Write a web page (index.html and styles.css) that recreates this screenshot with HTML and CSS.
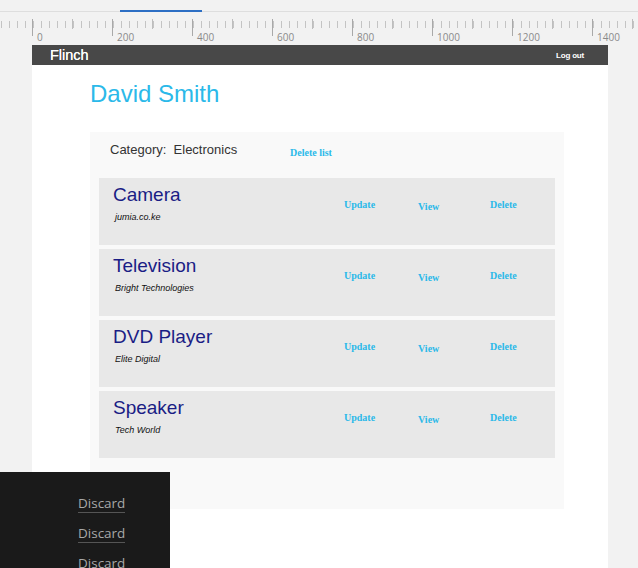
FILE: index.html
```html
<!DOCTYPE html>
<html lang="en">
<head>
	<meta charset="UTF-8">
	<meta name="viewport" content="width=device-width, initial-scale=1.0">
	<title>Flinch - Shopping lists</title>
	<link rel="stylesheet" href="styles.css">
</head>
<body>
	<div class="topbar">
		<span class="tab-line"></span>
	</div>
	<div class="ruler">
		<span>0</span>
		<span>200</span>
		<span>400</span>
		<span>600</span>
		<span>800</span>
		<span>1000</span>
		<span>1200</span>
		<span>1400</span>
	</div>

	<div class="page">
		<nav class="navbar">
			<span class="brand">Flinch</span>
			<a href="#" class="logout">Log out</a>
		</nav>

		<main class="content">
			<h1 class="user-name">David Smith</h1>

			<section class="list-card">
				<div class="list-head">
					<span class="category">Category:&nbsp; Electronics</span>
					<a href="#" class="action">Delete list</a>
				</div>

				<div class="items">
					<div class="item">
						<div class="info">
							<h2>Camera</h2>
							<p>jumia.co.ke</p>
						</div>
						<a href="#" class="action">Update</a>
						<a href="#" class="action view">View</a>
						<a href="#" class="action">Delete</a>
					</div>
					<div class="item">
						<div class="info">
							<h2>Television</h2>
							<p>Bright Technologies</p>
						</div>
						<a href="#" class="action">Update</a>
						<a href="#" class="action view">View</a>
						<a href="#" class="action">Delete</a>
					</div>
					<div class="item">
						<div class="info">
							<h2>DVD Player</h2>
							<p>Elite Digital</p>
						</div>
						<a href="#" class="action">Update</a>
						<a href="#" class="action view">View</a>
						<a href="#" class="action">Delete</a>
					</div>
					<div class="item">
						<div class="info">
							<h2>Speaker</h2>
							<p>Tech World</p>
						</div>
						<a href="#" class="action">Update</a>
						<a href="#" class="action view">View</a>
						<a href="#" class="action">Delete</a>
					</div>
				</div>
			</section>
		</main>
	</div>

	<div class="discard-panel">
		<a href="#">Discard</a>
		<a href="#">Discard</a>
		<a href="#">Discard</a>
	</div>
</body>
</html>
```

FILE: styles.css
```css
* {
	margin: 0;
	padding: 0;
	box-sizing: border-box;
}
html, body {
	height: 568px;
	overflow: hidden;
}
body {
	background-color: #f2f2f2;
	font-family: "Liberation Sans", Arial, sans-serif;
	position: relative;
}
a {
	text-decoration: none;
}

/* editor chrome */
.topbar {
	height: 12px;
	border-bottom: 1px solid #dedede;
}
.tab-line {
	display: block;
	margin-left: 120px;
	width: 82px;
	height: 12px;
	border-bottom: 2px solid #2d6fc4;
}
.ruler {
	display: flex;
	height: 33px;
	padding-left: 32px;
	padding-top: 19px;
	overflow: hidden;
	background-image:
		repeating-linear-gradient(to right, #a9a9a9 0 1px, transparent 1px 80px),
		repeating-linear-gradient(to right, #bdbdbd 0 1px, transparent 1px 80px),
		repeating-linear-gradient(to right, #c4c4c4 0 1px, transparent 1px 8px);
	background-position: 32px 7px, 72px 7px, 1px 9px;
	background-size: 100% 17px, 100% 10px, 100% 7px;
	background-repeat: no-repeat;
}
.ruler span {
	flex: 0 0 80px;
	padding-left: 5px;
	font-family: "Open Sans", sans-serif;
	font-size: 10px;
	color: #8a8a8a;
	line-height: 12px;
}

/* page */
.page {
	margin-left: 32px;
	width: 576px;
	height: 523px;
	background-color: #fff;
}
.navbar {
	display: flex;
	justify-content: space-between;
	align-items: center;
	height: 20px;
	padding: 0 24px 0 18px;
	background-color: #484848;
}
.brand {
	color: #fff;
	font-size: 14.5px;
	text-shadow: 0 0 0.4px #fff;
}
.logout {
	color: #fff;
	font-size: 8px;
	font-weight: bold;
	letter-spacing: -0.2px;
}
.content {
	padding: 15px 44px 0 58px;
}
.user-name {
	font-size: 24px;
	font-weight: normal;
	color: #2bb9e9;
	line-height: 28px;
}
.list-card {
	margin-top: 24px;
	width: 474px;
	background-color: #f9f9f9;
	padding: 9px 9px 51px;
}
.list-head {
	display: flex;
	align-items: baseline;
	padding-left: 11px;
	height: 37px;
}
.category {
	width: 180px;
	font-size: 13px;
	color: #333;
	line-height: 17px;
}
.list-head .action {
	position: relative;
	top: 2px;
}
.action {
	font-family: "Liberation Serif", "Times New Roman", serif;
	font-weight: bold;
	font-size: 10px;
	color: #2bb9e9;
}
.items {
	display: flex;
	flex-direction: column;
	gap: 4px;
}
.item {
	display: grid;
	grid-template-columns: 231px 74px 72px auto;
	align-items: start;
	height: 67px;
	padding: 5px 0 0 14px;
	background-color: #e8e8e8;
}
.item .action {
	margin-top: 16px;
}
.item .view {
	margin-top: 18px;
}
.info h2 {
	font-size: 19px;
	font-weight: normal;
	color: #1a1d85;
	line-height: 23px;
}
.info p {
	margin-top: 6px;
	padding-left: 2px;
	font-size: 9px;
	font-style: italic;
	color: #111;
}

/* overlay panel */
.discard-panel {
	position: absolute;
	left: 0;
	top: 472px;
	width: 170px;
	height: 96px;
	background-color: #1a1a1a;
	display: flex;
	flex-direction: column;
	align-items: flex-start;
	gap: 11px;
	padding: 22px 0 0 78px;
	overflow: hidden;
}
.discard-panel a {
	font-family: "Open Sans", sans-serif;
	font-size: 13.5px;
	color: #a8a8a8;
	border-bottom: 1px solid #555;
	line-height: 18px;
	flex: none;
}
```
